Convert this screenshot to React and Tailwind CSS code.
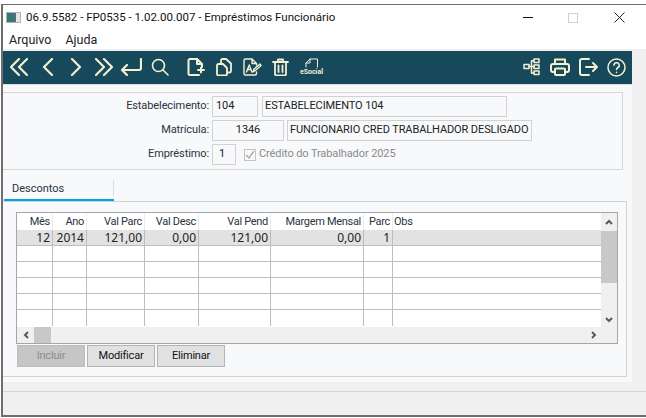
import React from 'react';

const ink = '#f5f0d2';

const cols = [
  { name: 'Mês', val: '12' },
  { name: 'Ano', val: '2014' },
  { name: 'Val Parc', val: '121,00' },
  { name: 'Val Desc', val: '0,00' },
  { name: 'Val Pend', val: '121,00' },
  { name: 'Margem Mensal', val: '0,00' },
  { name: 'Parc', val: '1' },
];

const gridCols = 'grid grid-cols-[36px_34px_58px_54px_72px_93px_29px_1fr]';

function Icon({ w, h = 20, vb, className, children, sw = 2 }) {
  return (
    <svg width={w} height={h} viewBox={vb || `0 0 ${w} ${h}`} fill="none" stroke={ink} strokeWidth={sw} strokeLinecap="round" strokeLinejoin="round" className={className}>
      {children}
    </svg>
  );
}

function Toolbar() {
  return (
    <div className="h-[34px] bg-[#17495c] border-b border-[#d8dde0] flex items-center pl-[7px] pb-[1px]">
      <Icon w={18} h={18} sw={2.2}><path d="M9 1 1 9l8 8M17 1 9 9l8 8" /></Icon>
      <Icon w={12} h={18} className="ml-[14px]" sw={2.2}><path d="M10 1 2 9l8 8" /></Icon>
      <Icon w={12} h={18} className="ml-[16px]" sw={2.2}><path d="M2 1l8 8-8 8" /></Icon>
      <Icon w={18} h={18} className="ml-[13px]" sw={2.2}><path d="M1 1l8 8-8 8M9 1l8 8-8 8" /></Icon>
      <Icon w={22} h={18} className="ml-[7px]" sw={2.2}><path d="M21 1v9a2 2 0 0 1-2 2H2M7 7l-5 5 5 5" /></Icon>
      <Icon w={18} h={18} className="ml-[9px]" sw={1.6}><circle cx="7.5" cy="7.5" r="6" /><path d="m12 12 5 5" /></Icon>
      <Icon w={18} h={18} className="ml-[18px]"><path d="M10 1H3a1.5 1.5 0 0 0-1.5 1.5v13A1.5 1.5 0 0 0 3 17h9" /><path d="M10 1l5 5v3M10 1v5h5M11 12h6M14 9.5v5" /></Icon>
      <Icon w={18} h={18} className="ml-[10px]" sw={1.8}><path d="M6 5V2.5A1.5 1.5 0 0 1 7.500 1H11l5 4.500V13a1.500 1.500 0 0 1-1.500 1.500H12" /><path d="M2 7.500A1.500 1.500 0 0 1 3.500 6H8l4 4v6a1.500 1.500 0 0 1-1.500 1.500h-7A1.500 1.500 0 0 1 2 16z" /></Icon>
      <Icon w={19} h={18} className="ml-[10px]" sw={1.4}>
        <path d="M9 1H2.500A1.500 1.500 0 0 0 1 2.500v13A1.500 1.500 0 0 0 2.500 17H12a1.500 1.500 0 0 0 1.500-1.500V14M9 1l4.500 4.500V7M9 1v4.500h4.500" />
        <path d="m3.500 14 2.700-7 2.700 7M4.500 11.500h3.500M10 14l1-3 6-5 1 1.500-6 5.200z" />
      </Icon>
      <Icon w={17} h={18} className="ml-[10px]" sw={1.8}><path d="M1 4h15M6 4V1.500h5V4M3 4v12a1.500 1.500 0 0 0 1.500 1.500h8A1.500 1.500 0 0 0 14 16V4M6.500 7.500V14M10.500 7.500V14" /></Icon>
      <div className="ml-[9px] w-[27px] h-[18px] relative flex justify-center items-end">
        <Icon w={14} h={10} className="absolute top-0 left-[7px]" sw={1}><path d="M1 9V5l4-4h7.500v8" /><path d="M5 1v4H1" /></Icon>
        <span className="text-[7px] leading-[8px] font-bold text-[#f5f0d2]">eSocial</span>
      </div>
      <Icon w={17} h={18} className="ml-[198px]" sw={1.5}>
        <rect x="1" y="6.500" width="5" height="4" /><rect x="11" y="1" width="5" height="3.500" /><rect x="11" y="7" width="5" height="3.500" /><rect x="11" y="13" width="5" height="3.500" />
        <path d="M6 8.500h5M8.500 2.750v12.500M8.500 2.750H11M8.500 15H11" />
      </Icon>
      <Icon w={20} h={18} className="ml-[10px]" sw={2}><path d="M5 6V1.500h10V6M5 14H3a2 2 0 0 1-2-2V8a2 2 0 0 1 2-2h14a2 2 0 0 1 2 2v4a2 2 0 0 1-2 2h-2" /><rect x="5" y="10.500" width="10" height="6.500" rx="1" /></Icon>
      <Icon w={20} h={18} className="ml-[9px]"><path d="M10 1H3a2 2 0 0 0-2 2v12a2 2 0 0 0 2 2h7M7 9h11M14 5l4 4-4 4" /></Icon>
      <Icon w={19} h={19} className="ml-[8px]" sw={1.5}><circle cx="9.500" cy="9.500" r="8.500" /><path d="M7 7.300a2.600 2.600 0 1 1 3.700 2.400c-.8.400-1.200.9-1.200 1.800M9.500 14.300v.2" /></Icon>
    </div>
  );
}

function Field({ className, children }) {
  return (
    <div className={`h-[21px] border border-[#d2d2d2] bg-[#f8f9fb] flex items-center text-[#222] whitespace-nowrap ${className}`}>
      {children}
    </div>
  );
}

function Label({ children }) {
  return <div className="w-[207px] text-right text-[#2a3340] pr-[1px]">{children}</div>;
}

function Form() {
  return (
    <div className="mt-[7px] h-[78px] w-[620px] border-y border-r border-[#d6d6d6] pt-[3px] flex flex-col gap-[3px] text-[11px] tracking-[-0.1px]">
      <div className="flex items-center">
        <Label>Estabelecimento:</Label>
        <Field className="ml-[2px] w-[46px] pl-[3px]">104</Field>
        <Field className="ml-[4px] w-[245px] pl-[2px]">ESTABELECIMENTO 104</Field>
      </div>
      <div className="flex items-center">
        <Label>Matrícula:</Label>
        <Field className="ml-[2px] w-[72px] justify-center">1346</Field>
        <Field className="ml-[3px] w-[245px] pl-[2px]">FUNCIONARIO CRED TRABALHADOR DESLIGADO</Field>
      </div>
      <div className="flex items-center">
        <Label>Empréstimo:</Label>
        <Field className="ml-[2px] w-[24px] pl-[6px]">1</Field>
        <div className="ml-[8px] w-[12px] h-[12px] border border-[#c4c4c4] flex items-center justify-center">
          <svg width="10" height="10" viewBox="0 0 10 10" fill="none" stroke="#a8a8a8" strokeWidth="1.300"><path d="m1 5 3 3 5-7" /></svg>
        </div>
        <span className="ml-[3px] text-[#8a8a8a]">Crédito do Trabalhador 2025</span>
      </div>
    </div>
  );
}

function Arrow({ d }) {
  return (
    <svg width="8" height="8" viewBox="0 0 8 8" fill="none" stroke="#5a5a5a" strokeWidth="2"><path d={d} /></svg>
  );
}

function Row({ data, last }) {
  return (
    <div className={`${gridCols} h-[16px] ${data ? 'bg-[#e2e2e2]' : 'bg-white'} ${last ? '' : 'border-b border-[#bdbdbd]'}`}>
      {cols.map(c => (
        <div key={c.name} className="border-r border-[#bdbdbd] text-right pr-[2px] leading-[15px] text-[#222] text-[12px] tracking-normal font-['Noto_Sans',sans-serif]">
          {data ? c.val : ''}
        </div>
      ))}
      <div />
    </div>
  );
}

function Grid() {
  return (
    <div className="h-[132px] w-[602px] border border-[#a6a6a6] flex flex-col bg-[#f0f0f0] text-[11px] tracking-[-0.3px]">
      <div className="flex h-[114px]">
        <div className="w-[584px] bg-white">
          <div className={`${gridCols} h-[17px]`}>
            {cols.map(c => (
              <div key={c.name} className="border-r border-[#ececec] text-right pr-[2px] leading-[18px] text-[#2a3340] whitespace-nowrap">{c.name}</div>
            ))}
            <div className="pl-[1px] leading-[18px] text-[#2a3340]">Obs</div>
          </div>
          <Row data />
          <Row />
          <Row />
          <Row />
          <Row />
          <Row last />
        </div>
        <div className="w-[16px] flex flex-col items-center">
          <div className="h-[18px] flex items-center justify-center"><Arrow d="M1 6l3-3 3 3" /></div>
          <div className="w-full h-[52px] bg-[#c8c8c8]" />
          <div className="flex-1 flex items-end justify-center pb-[3px]"><Arrow d="M1 2l3 3 3-3" /></div>
        </div>
      </div>
      <div className="h-[16px] w-[584px] flex items-center">
        <div className="w-[17px] flex justify-center"><Arrow d="M6 1 3 4l3 3" /></div>
        <div className="w-[17px] h-full bg-[#c8c8c8]" />
        <div className="flex-1 flex justify-end pr-[3px]"><Arrow d="M2 1l3 3-3 3" /></div>
      </div>
    </div>
  );
}

function Button({ disabled, children }) {
  return (
    <button className={`w-[68px] h-[22px] border text-[11px] tracking-[-0.2px] ${disabled ? 'bg-[#c6c6c6] border-[#bcbcbc] text-[#8b8b8b]' : 'bg-[#e1e1e1] border-[#b4b4b4] text-[#111]'}`}>
      {children}
    </button>
  );
}

export default function App() {
  return (
    <div className="w-[646px] h-[418px] bg-white pt-[4px] overflow-hidden font-['Roboto','Noto_Sans',sans-serif]">
      <div className="h-[413px] ml-[1px] border-t border-l-2 border-b-2 border-[#6e6e6e] flex flex-col">
        <div className="h-[25px] flex items-center pl-[3px] pr-[21px] bg-white">
          <div className="w-[15px] h-[11px] border border-[#aab4c0] bg-[#dfe6ee] flex">
            <div className="w-[6px] bg-[#2f7d72]" />
            <div className="w-[3px] bg-[#5a6a80]" />
          </div>
          <span className="ml-[5px] text-[11.5px] text-[#111] whitespace-nowrap flex-1">06.9.5582 - FP0535 - 1.02.00.007 - Empréstimos Funcionário</span>
          <div className="w-[10px] h-[1px] bg-[#111]" />
          <div className="ml-[35px] w-[10px] h-[10px] border border-[#cfcfcf]" />
          <svg className="ml-[36px]" width="11" height="11" viewBox="0 0 11 11" stroke="#222"><path d="m.5.5 10 10M10.500.500l-10 10" /></svg>
        </div>
        <div className="h-[19px] flex items-center gap-[14px] pl-[6px] pt-[1px] text-[12.5px] text-[#222] bg-white">
          <span>Arquivo</span>
          <span>Ajuda</span>
        </div>
        <div className="flex-1 bg-[#f0f0f0] pt-[2px] flex flex-col">
          <div className="w-[629px] bg-[#f8f9fb] pb-[5px]">
            <Toolbar />
            <Form />
            <div className="mt-[10px] h-[19px] w-[110px] ml-[1px] text-[11px] text-[#2a3340] pl-[8px] leading-[18px] relative">
              Descontos
              <div className="absolute right-[0px] top-0 w-[1px] h-[16px] bg-[#dcdcdc]" />
            </div>
            <div className="h-[3px] w-[110px] ml-[1px] bg-[#00a4e4]" />
            <div className="h-[176px] w-[624px] border-y border-r border-[#d2d2d2] pl-[13px] pt-[10px] -mt-[1px]">
              <Grid />
              <div className="flex gap-[2px] mt-[1px] ml-[1px]">
                <Button disabled>Incluir</Button>
                <Button>Modificar</Button>
                <Button>Eliminar</Button>
              </div>
            </div>
          </div>
          <div className="mt-[9px] border-t border-[#d6d6d6]" />
        </div>
      </div>
    </div>
  );
}
